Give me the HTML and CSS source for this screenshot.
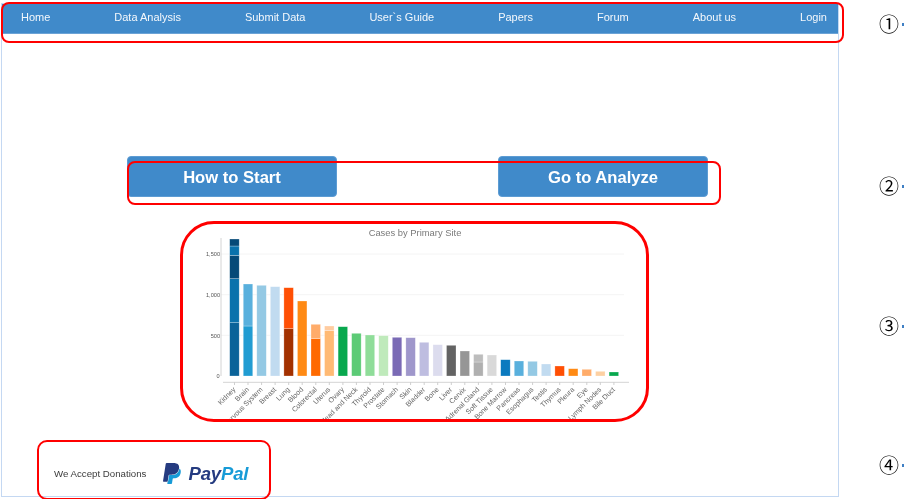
FILE: index.html
```html
<!DOCTYPE html>
<html lang="en">
<head>
<meta charset="utf-8">
<title>Cases by Primary Site</title>
<link rel="stylesheet" href="styles.css">
</head>
<body>
<div class="page">
  <div class="frame">
    <nav class="nav">
      <a>Home</a><a>Data Analysis</a><a>Submit Data</a><a>User`s Guide</a><a>Papers</a><a>Forum</a><a>About us</a><a>Login</a>
    </nav>
    <div class="actions">
      <a class="btn">How to Start</a>
      <a class="btn">Go to Analyze</a>
    </div>
    <svg class="chart" viewBox="190 225 440 195" width="440" height="195">
      <text class="title" x="415" y="235.5" text-anchor="middle">Cases by Primary Site</text>
      <g class="grid">
        <line x1="221" x2="624" y1="254" y2="254"/><line x1="221" x2="624" y1="294.7" y2="294.7"/><line x1="221" x2="624" y1="335.3" y2="335.3"/>
      </g>
      <line class="axis" x1="221" x2="221" y1="238" y2="376"/>
      <line class="axis" x1="223" x2="629" y1="382.3" y2="382.3"/>
      <g class="ylab" text-anchor="end">
        <text x="220" y="256">1,500</text><text x="220" y="297">1,000</text><text x="220" y="337.5">500</text><text x="219.5" y="378">0</text>
      </g>
      <g class="bars">
        <rect class="k1" x="229.7" y="322.7" width="9.5" height="53.3"/>
        <rect class="k2" x="229.7" y="278.7" width="9.5" height="44"/>
        <rect class="k3" x="229.7" y="255.3" width="9.5" height="23.4"/>
        <rect class="k2" x="229.7" y="246" width="9.5" height="9.3"/>
        <rect class="k3" x="229.7" y="239" width="9.5" height="7"/>
        <rect class="b1" x="243.25" y="326" width="9.5" height="50"/>
        <rect class="b2" x="243.25" y="284" width="9.5" height="42"/>
        <rect class="b3" x="256.8" y="285.3" width="9.5" height="90.7"/>
        <rect class="b4" x="270.35" y="286.7" width="9.5" height="89.3"/>
        <rect class="o0" x="283.9" y="328.7" width="9.5" height="47.3"/>
        <rect class="o1" x="283.9" y="287.7" width="9.5" height="41"/>
        <rect class="o2" x="297.45" y="301" width="9.5" height="75"/>
        <rect class="o3" x="311" y="338.7" width="9.5" height="37.3"/>
        <rect class="o4" x="311" y="324.3" width="9.5" height="14.4"/>
        <rect class="o5" x="324.55" y="330.7" width="9.5" height="45.3"/>
        <rect class="o6" x="324.55" y="326" width="9.5" height="4.7"/>
        <rect class="g1" x="338.1" y="326.7" width="9.5" height="49.3"/>
        <rect class="g2" x="351.65" y="333.3" width="9.5" height="42.7"/>
        <rect class="g3" x="365.2" y="335" width="9.5" height="41"/>
        <rect class="g4" x="378.75" y="335.7" width="9.5" height="40.3"/>
        <rect class="p1" x="392.3" y="337.3" width="9.5" height="38.7"/>
        <rect class="p2" x="405.85" y="337.7" width="9.5" height="38.3"/>
        <rect class="p3" x="419.4" y="342.3" width="9.5" height="33.7"/>
        <rect class="p4" x="432.95" y="344.7" width="9.5" height="31.3"/>
        <rect class="n1" x="446.5" y="345.3" width="9.5" height="30.7"/>
        <rect class="n2" x="460.05" y="351" width="9.5" height="25"/>
        <rect class="n3" x="473.6" y="362" width="9.5" height="14"/>
        <rect class="n4" x="473.6" y="354.3" width="9.5" height="7.7"/>
        <rect class="n5" x="487.15" y="355" width="9.5" height="21"/>
        <rect class="b5" x="500.7" y="359.7" width="9.5" height="16.3"/>
        <rect class="b2" x="514.25" y="361" width="9.5" height="15"/>
        <rect class="b3" x="527.8" y="361.3" width="9.5" height="14.7"/>
        <rect class="b4" x="541.35" y="364" width="9.5" height="12"/>
        <rect class="o1" x="554.9" y="366" width="9.5" height="10"/>
        <rect class="o2" x="568.45" y="368.7" width="9.5" height="7.3"/>
        <rect class="o4" x="582" y="369.3" width="9.5" height="6.7"/>
        <rect class="o7" x="595.55" y="371.3" width="9.5" height="4.7"/>
        <rect class="g1" x="609.1" y="372" width="9.5" height="4"/>
      </g>
      <g class="ticks">
        <line x1="234.5" x2="234.5" y1="382" y2="385"/><line x1="248" x2="248" y1="382" y2="385"/><line x1="261.6" x2="261.6" y1="382" y2="385"/><line x1="275.1" x2="275.1" y1="382" y2="385"/><line x1="288.7" x2="288.7" y1="382" y2="385"/><line x1="302.2" x2="302.2" y1="382" y2="385"/><line x1="315.8" x2="315.8" y1="382" y2="385"/><line x1="329.3" x2="329.3" y1="382" y2="385"/><line x1="342.9" x2="342.9" y1="382" y2="385"/><line x1="356.4" x2="356.4" y1="382" y2="385"/><line x1="370" x2="370" y1="382" y2="385"/><line x1="383.5" x2="383.5" y1="382" y2="385"/><line x1="397.1" x2="397.1" y1="382" y2="385"/><line x1="410.6" x2="410.6" y1="382" y2="385"/><line x1="424.2" x2="424.2" y1="382" y2="385"/><line x1="437.7" x2="437.7" y1="382" y2="385"/><line x1="451.3" x2="451.3" y1="382" y2="385"/><line x1="464.8" x2="464.8" y1="382" y2="385"/><line x1="478.4" x2="478.4" y1="382" y2="385"/><line x1="491.9" x2="491.9" y1="382" y2="385"/><line x1="505.5" x2="505.5" y1="382" y2="385"/><line x1="519" x2="519" y1="382" y2="385"/><line x1="532.6" x2="532.6" y1="382" y2="385"/><line x1="546.1" x2="546.1" y1="382" y2="385"/><line x1="559.7" x2="559.7" y1="382" y2="385"/><line x1="573.2" x2="573.2" y1="382" y2="385"/><line x1="586.8" x2="586.8" y1="382" y2="385"/><line x1="600.3" x2="600.3" y1="382" y2="385"/><line x1="613.9" x2="613.9" y1="382" y2="385"/>
      </g>
      <g class="xlab" text-anchor="end">
        <text x="236" y="390" transform="rotate(-45 236 390)">Kidney</text>
        <text x="249.5" y="390" transform="rotate(-45 249.5 390)">Brain</text>
        <text x="263.1" y="390" transform="rotate(-45 263.1 390)">Nervous System</text>
        <text x="276.6" y="390" transform="rotate(-45 276.6 390)">Breast</text>
        <text x="290.2" y="390" transform="rotate(-45 290.2 390)">Lung</text>
        <text x="303.7" y="390" transform="rotate(-45 303.7 390)">Blood</text>
        <text x="317.3" y="390" transform="rotate(-45 317.3 390)">Colorectal</text>
        <text x="330.8" y="390" transform="rotate(-45 330.8 390)">Uterus</text>
        <text x="344.4" y="390" transform="rotate(-45 344.4 390)">Ovary</text>
        <text x="357.9" y="390" transform="rotate(-45 357.9 390)">Head and Neck</text>
        <text x="371.5" y="390" transform="rotate(-45 371.5 390)">Thyroid</text>
        <text x="385" y="390" transform="rotate(-45 385 390)">Prostate</text>
        <text x="398.6" y="390" transform="rotate(-45 398.6 390)">Stomach</text>
        <text x="412.1" y="390" transform="rotate(-45 412.1 390)">Skin</text>
        <text x="425.7" y="390" transform="rotate(-45 425.7 390)">Bladder</text>
        <text x="439.2" y="390" transform="rotate(-45 439.2 390)">Bone</text>
        <text x="452.8" y="390" transform="rotate(-45 452.8 390)">Liver</text>
        <text x="466.3" y="390" transform="rotate(-45 466.3 390)">Cervix</text>
        <text x="479.9" y="390" transform="rotate(-45 479.9 390)">Adrenal Gland</text>
        <text x="493.4" y="390" transform="rotate(-45 493.4 390)">Soft Tissue</text>
        <text x="507" y="390" transform="rotate(-45 507 390)">Bone Marrow</text>
        <text x="520.5" y="390" transform="rotate(-45 520.5 390)">Pancreas</text>
        <text x="534.1" y="390" transform="rotate(-45 534.1 390)">Esophagus</text>
        <text x="547.6" y="390" transform="rotate(-45 547.6 390)">Testis</text>
        <text x="561.2" y="390" transform="rotate(-45 561.2 390)">Thymus</text>
        <text x="574.7" y="390" transform="rotate(-45 574.7 390)">Pleura</text>
        <text x="588.3" y="390" transform="rotate(-45 588.3 390)">Eye</text>
        <text x="601.8" y="390" transform="rotate(-45 601.8 390)">Lymph Nodes</text>
        <text x="615.4" y="390" transform="rotate(-45 615.4 390)">Bile Duct</text>
      </g>
    </svg>
    <div class="donate">
      <span class="donate-text">We Accept Donations</span>
      <div class="paypal">
        <svg class="pp-mark" viewBox="1.8 0 20.6 24" width="18" height="21">
          <path class="pp-light" d="M21.222 6.917a3.35 3.35 0 0 0-.607-.541c-.013.076-.026.175-.041.254-.93 4.778-4.005 7.201-9.138 7.201h-2.19a.563.563 0 0 0-.556.479l-1.187 7.527h-.506l-.24 1.516a.56.56 0 0 0 .554.647h3.882c.46 0 .85-.334.922-.788.06-.26.76-4.852.816-5.09a.932.932 0 0 1 .923-.788h.58c3.76 0 6.705-1.528 7.565-5.946.36-1.847.174-3.388-.777-4.471z"/>
          <path class="pp-dark" d="M7.076 21.337H2.47a.641.641 0 0 1-.633-.74L4.944.901C5.026.382 5.474 0 5.998 0h7.46c2.57 0 4.578.543 5.69 1.81 1.01 1.15 1.304 2.42 1.012 4.287-.023.143-.047.288-.077.437-.983 5.05-4.349 6.797-8.647 6.797h-2.19c-.524 0-.968.382-1.05.9l-1.12 7.106z"/>
        </svg>
        <span class="pp-word"><span class="pp-pay">Pay</span><span class="pp-pal">Pal</span></span>
      </div>
    </div>
  </div>

  <div class="mark mark-nav"></div>
  <div class="mark mark-actions"></div>
  <div class="mark mark-chart"></div>
  <div class="mark mark-donate"></div>

  <div class="callout callout-1"><span>①</span><i></i></div>
  <div class="callout callout-2"><span>②</span><i></i></div>
  <div class="callout callout-3"><span>③</span><i></i></div>
  <div class="callout callout-4"><span>④</span><i></i></div>
</div>
</body>
</html>
```

FILE: styles.css
```css
* { box-sizing: border-box; }
html, body { margin: 0; padding: 0; background: #fff; }
body { font-family: "Liberation Sans", Arial, sans-serif; }
.page { position: relative; width: 904px; height: 499px; overflow: hidden; background: #fff; filter: blur(.35px); }

.frame {
  width: 838px;
  height: 494px;
  margin: 3px 0 0 1px;
  border: 1px solid #c4d8f2;
}

.nav {
  display: flex;
  justify-content: space-between;
  align-items: center;
  height: 30px;
  padding: 0 11px 4px 19px;
  background: #408aca;
  border-bottom: 1px solid #6ba3d6;
  color: #f4f8fc;
  font-size: 11px;
}

.actions {
  display: flex;
  gap: 161px;
  margin: 122px 0 0 125px;
}
.btn {
  display: flex;
  align-items: center;
  justify-content: center;
  width: 210px;
  height: 41px;
  padding-top: 2px;
  background: #408aca;
  border: 1px solid #5d9cd3;
  border-radius: 4px;
  color: #fff;
  font-size: 16.6px;
  font-weight: 700;
}

.chart { display: block; margin: 28px 0 0 188px; }
.title { font-size: 9.4px; fill: #7a7a7a; }
.grid line { stroke: #f4f4f4; stroke-width: 1; }
.axis { stroke: #d4d4d4; stroke-width: 1; }
.ticks line { stroke: #cfcfcf; stroke-width: 1; }
.ylab text { font-size: 5.6px; fill: #555; }
.xlab text { font-size: 7.1px; fill: #666; }
.bars rect { stroke: #fff; stroke-opacity: .45; stroke-width: .6; }

.k1 { fill: #0a6399; } .k2 { fill: #0a72ac; } .k3 { fill: #064a78; }
.b1 { fill: #219cd2; } .b2 { fill: #59b0dd; } .b3 { fill: #94c9e4; } .b4 { fill: #c1dbf0; } .b5 { fill: #0a7abf; }
.o0 { fill: #a33100; } .o1 { fill: #ff4f04; } .o2 { fill: #ff8a14; } .o3 { fill: #ff6a00; }
.o4 { fill: #ffac6a; } .o5 { fill: #ffba74; } .o6 { fill: #ffcca0; } .o7 { fill: #fdd0a2; }
.g1 { fill: #08a84e; } .g2 { fill: #5ccb76; } .g3 { fill: #8fdd99; } .g4 { fill: #bfeabb; }
.p1 { fill: #7a6ab5; } .p2 { fill: #9f97cb; } .p3 { fill: #bebde0; } .p4 { fill: #dcdcee; }
.n1 { fill: #636363; } .n2 { fill: #969696; } .n3 { fill: #b0b0b0; } .n4 { fill: #bdbdbd; } .n5 { fill: #d9d9d9; }

.donate {
  display: flex;
  align-items: center;
  gap: 17px;
  margin: 43px 0 0 52px;
  height: 21px;
}
.donate-text { font-size: 9.7px; color: #3c3c3c; }
.paypal { display: flex; align-items: center; gap: 7px; }
.pp-mark { display: block; }
.pp-light { fill: #179bd7; }
.pp-dark { fill: #253b80; }
.pp-word { font-size: 18.6px; font-weight: 700; font-style: italic; letter-spacing: -.2px; line-height: 21px; }
.pp-pay { color: #253b80; }
.pp-pal { color: #179bd7; }

.mark { position: absolute; border: 2px solid #f00; }
.mark-nav { left: 1px; top: 2px; width: 843px; height: 41px; border-radius: 8px; }
.mark-actions { left: 127px; top: 161px; width: 594px; height: 44px; border-radius: 8px; }
.mark-chart { left: 180px; top: 221px; width: 469px; height: 201px; border-radius: 34px; border-width: 3px; }
.mark-donate { left: 37px; top: 440px; width: 234px; height: 60px; border-radius: 10px; }

.callout { position: absolute; left: 879px; width: 25px; display: flex; align-items: center; justify-content: space-between; height: 24px; }
.callout span { font-family: "Noto Sans CJK SC", "DejaVu Sans", sans-serif; font-size: 20px; line-height: 24px; color: #000; }
.callout i { width: 2px; height: 3px; background: #3f7fc4; }
.callout-1 { top: 12px; }
.callout-2 { top: 174px; }
.callout-3 { top: 314px; }
.callout-4 { top: 453px; }
```
